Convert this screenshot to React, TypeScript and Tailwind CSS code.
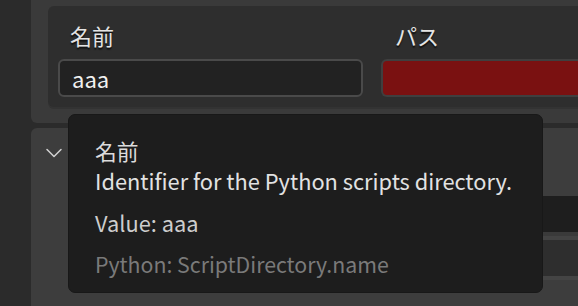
import { ChevronDown } from "lucide-react";

const font = { fontFamily: '"Noto Sans CJK JP", "Noto Sans", sans-serif' };

const Tooltip = () => (
  <div className="absolute left-[68px] top-[114px] w-[475px] h-[179px] bg-[#1d1d1d] border border-[#181818] rounded-[7px] pl-[26px] pt-[21px] text-[21.8px] leading-[30px]">
    <div className="text-[#dcdcdc]">名前</div>
    <div className="text-[#e2e2e2]">Identifier for the Python scripts directory.</div>
    <div className="mt-[12px] text-[#cdcdcd]">Value: aaa</div>
    <div className="mt-[11px] text-[21.3px] text-[#7a7a7a]">Python: ScriptDirectory.name</div>
  </div>
);

export default function App() {
  return (
    <div className="relative w-[578px] h-[306px] overflow-hidden bg-[#2b2b2b] pl-[31px] flex flex-col" style={font}>
      {/* upper panel */}
      <div className="h-[123px] bg-[#3a3a3a] rounded-bl-[6px] pl-[17px] pt-[6px]">
        <div className="h-[101px] bg-[#2e2e2e] rounded-l-[6px] pl-[10px] shadow-[0_2px_0_#333333]">
          <div className="grid grid-cols-[305px_1fr] gap-x-[18px]">
            <div className="flex flex-col">
              <div className="h-[53px] pt-[14px] pl-[12px] text-[22px] leading-[30px] text-[#e4e4e4] [text-shadow:0_2px_1px_#111]">名前</div>
              <div className="h-[38px] bg-[#222222] border-2 border-[#4a4a4a] rounded-[6px] pl-[12px] flex items-center text-[22px] text-[#f0f0f0]">aaa</div>
            </div>
            <div className="flex flex-col">
              <div className="h-[53px] pt-[14px] pl-[14px] text-[22px] leading-[30px] text-[#e4e4e4] [text-shadow:0_2px_1px_#111]">パス</div>
              <div className="h-[38px] bg-[#7a1111] border-2 border-[#3f3f3f] border-r-0 rounded-l-[6px]" />
            </div>
          </div>
        </div>
      </div>

      {/* lower panel */}
      <div className="mt-[5px] flex-1 bg-[#3d3d3d] rounded-tl-[6px] flex flex-col">
        <div className="pl-[9px] pt-[11px] h-[68px]">
          <ChevronDown size={28} strokeWidth={1.3} className="text-[#d0d0d0]" />
        </div>
        <div className="ml-[200px] h-[36px] bg-[#1e1e1e]" />
        <div className="ml-[200px] h-[4px] bg-[#3a3a3a]" />
        <div className="ml-[200px] h-[4px] bg-[#434343]" />
        <div className="ml-[200px] h-[36px] bg-[#2e2e2e]" />
        <div className="ml-[200px] h-[4px] bg-[#444444]" />
      </div>

      <Tooltip />
    </div>
  );
}
